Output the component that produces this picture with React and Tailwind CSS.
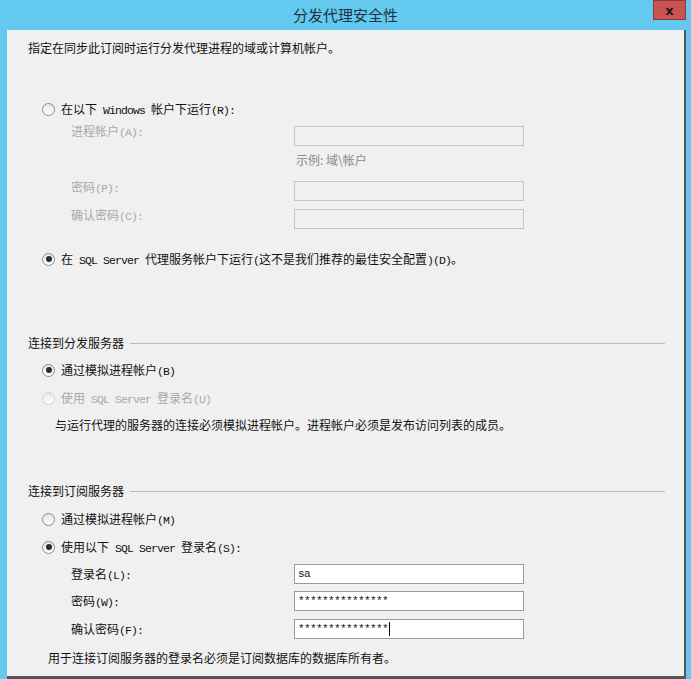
import React from "react";

const cjk = "font-['Noto_Sans_CJK_SC',sans-serif]";

// SimSun-style half-width latin inside CJK labels
function M({ children }) {
  return <span className="font-['Liberation_Mono',monospace] text-[11.5px] leading-[20px] tracking-[-0.9px] whitespace-pre">{children}</span>;
}

function Radio({ checked, disabled }) {
  return (
    <span
      className={`flex h-[13px] w-[13px] shrink-0 items-center justify-center rounded-full border bg-gradient-to-b from-[#e6e6e6] to-white ${
        disabled ? "border-[#d2d2d2]" : "border-[#8a8a8a]"
      }`}
    >
      {checked && <span className="h-[6px] w-[6px] rounded-full bg-[#2b2b2b]" />}
    </span>
  );
}

function RadioRow({ checked, disabled, children, className = "" }) {
  return (
    <div className={`flex h-[20px] items-center gap-[6px] pl-[14px] ${className}`}>
      <Radio checked={checked} disabled={disabled} />
      <span className={`h-[20px] ${disabled ? "text-[#a8a8a8]" : "text-[#111]"}`}>{children}</span>
    </div>
  );
}

function Box({ value, disabled, cursor }) {
  return (
    <div
      className={`flex h-[20px] w-[230px] items-center border px-[3px] ${
        disabled ? "border-[#c4c4c4] bg-[#f0f0f0]" : "border-[#9a9a9a] bg-white"
      }`}
    >
      {value && <span className="font-['Liberation_Mono',monospace] text-[11px] leading-none tracking-[-0.6px] text-[#111]">{value}</span>}
      {cursor && <span className="ml-[1px] h-[14px] w-px bg-black" />}
    </div>
  );
}

function Section({ title, className = "" }) {
  return (
    <div className={`flex h-[20px] items-center gap-[6px] ${className}`}>
      <span className="text-[#111]">{title}</span>
      <div className="h-px flex-1 bg-[#bdbdbd]" />
    </div>
  );
}

function Field({ label, children, muted, offset = 0, className = "" }) {
  return (
    <div className={`flex h-[20px] items-start ${className}`}>
      <span className={`h-[20px] w-[266px] shrink-0 pl-[43px] ${muted ? "text-[#a8a8a8]" : "text-[#111]"}`}>{label}</span>
      <div style={{ marginTop: offset }}>{children}</div>
    </div>
  );
}

export default function App() {
  return (
    <div className={`relative h-[679px] w-[691px] overflow-hidden bg-[#64c9ef] text-[12px] leading-[20px] ${cjk}`}>
      {/* title bar */}
      <div className="flex h-[30px] items-center justify-center text-[15px] text-[#1c3344]">分发代理安全性</div>
      <div className="absolute right-[5px] top-0 flex h-[20px] w-[33px] items-center justify-center border border-[#8c3a3a] bg-[#c9534f] font-['DejaVu_Sans',sans-serif] text-[13px] font-bold leading-none text-[#1a1a1a]">
        x
      </div>

      {/* body */}
      <div className="ml-[7px] h-[649px] w-[679px] border-b-[3px] border-r-2 border-[#555] bg-[#f0f0f0] pl-[21px] pr-[19px] pt-[8px]">
        <div className="h-[20px] text-[#111]">指定在同步此订阅时运行分发代理进程的域或计算机帐户。</div>

        <RadioRow className="mt-[41px]">
          在以下<M> Windows </M>帐户下运行<M>(R):</M>
        </RadioRow>

        <Field label={<>进程帐户<M>(A):</M></>} muted offset={5} className="mt-[2px]">
          <Box disabled />
        </Field>
        <div className="mt-[9px] flex h-[20px]">
          <span className="w-[268px] shrink-0" />
          <span className="text-[#8a8a8a]">示例:  域\帐户</span>
        </div>
        <Field label={<>密码<M>(P):</M></>} muted offset={4} className="mt-[7px]">
          <Box disabled />
        </Field>
        <Field label={<>确认密码<M>(C):</M></>} muted offset={4} className="mt-[8px]">
          <Box disabled />
        </Field>

        <RadioRow checked className="mt-[24px]">
          在<M> SQL Server </M>代理服务帐户下运行<M>(</M>这不是我们推荐的最佳安全配置<M>)(D)</M>。
        </RadioRow>

        <Section title="连接到分发服务器" className="mt-[64px]" />
        <RadioRow checked className="mt-[7px]">
          通过模拟进程帐户<M>(B)</M>
        </RadioRow>
        <RadioRow disabled className="mt-[8px]">
          使用<M> SQL Server </M>登录名<M>(U)</M>
        </RadioRow>
        <div className="mt-[7px] h-[20px] pl-[27px] text-[#111]">
          与运行代理的服务器的连接必须模拟进程帐户。进程帐户必须是发布访问列表的成员。
        </div>

        <Section title="连接到订阅服务器" className="mt-[46px]" />
        <RadioRow className="mt-[8px]">
          通过模拟进程帐户<M>(M)</M>
        </RadioRow>
        <RadioRow checked className="mt-[8px]">
          使用以下<M> SQL Server </M>登录名<M>(S):</M>
        </RadioRow>

        <Field label={<>登录名<M>(L):</M></>} className="mt-[7px]">
          <Box value="sa" />
        </Field>
        <Field label={<>密码<M>(W):</M></>} className="mt-[7px]">
          <Box value="***************" />
        </Field>
        <Field label={<>确认密码<M>(F):</M></>} className="mt-[8px]">
          <Box value="***************" cursor />
        </Field>

        <div className="mt-[9px] h-[20px] pl-[20px] text-[#111]">
          用于连接订阅服务器的登录名必须是订阅数据库的数据库所有者。
        </div>
      </div>
    </div>
  );
}
